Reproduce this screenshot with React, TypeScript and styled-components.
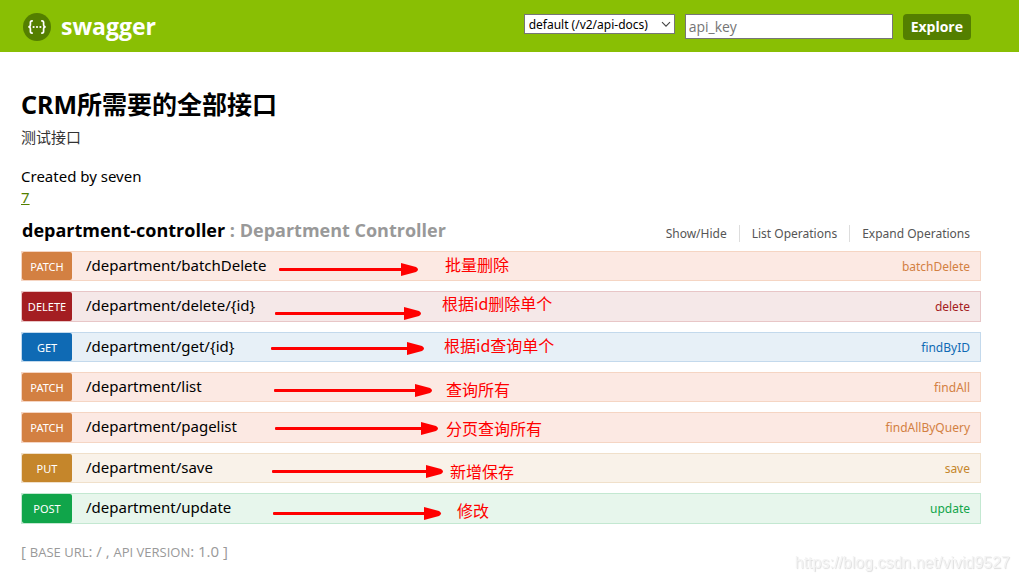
import React from "react";
import styled, { createGlobalStyle } from "styled-components";

type Method = "get" | "post" | "put" | "patch" | "delete";

const palette: Record<Method, { main: string; back: string; line: string }> = {
  get: { main: "#0f6ab4", back: "#e7f0f7", line: "#c3d9ec" },
  post: { main: "#10a54a", back: "#e7f6ec", line: "#c3e8d1" },
  put: { main: "#c5862b", back: "#f9f2e9", line: "#f0e0ca" },
  patch: { main: "#d38042", back: "#fce9e3", line: "#f5d5c3" },
  delete: { main: "#a41e22", back: "#f5e8e8", line: "#e8c6c7" },
};

interface Operation {
  method: Method;
  path: string;
  name: string;
}

const operations: Operation[] = [
  { method: "patch", path: "/department/batchDelete", name: "batchDelete" },
  { method: "delete", path: "/department/delete/{id}", name: "delete" },
  { method: "get", path: "/department/get/{id}", name: "findByID" },
  { method: "patch", path: "/department/list", name: "findAll" },
  { method: "patch", path: "/department/pagelist", name: "findAllByQuery" },
  { method: "put", path: "/department/save", name: "save" },
  { method: "post", path: "/department/update", name: "update" },
];

/* Hand-drawn notes: arrow start, tip and height, then the place of the label. */
const notes = [
  { from: 258, tip: 398, y: 18, x: 424, top: 1, text: "批量删除" },
  { from: 254, tip: 401, y: 62, x: 421, top: 40, text: "根据id删除单个" },
  { from: 250, tip: 404, y: 97, x: 423, top: 82, text: "根据id查询单个" },
  { from: 253, tip: 412, y: 139, x: 425, top: 126, text: "查询所有" },
  { from: 254, tip: 418, y: 177, x: 425, top: 165, text: "分页查询所有" },
  { from: 251, tip: 423, y: 220, x: 429, top: 208, text: "新增保存" },
  { from: 252, tip: 421, y: 262, x: 436, top: 247, text: "修改" },
];

const GlobalStyle = createGlobalStyle`
  * { box-sizing: border-box; }
  body {
    margin: 0;
    background: #fff;
    color: #000;
    font: 15px/22px "Noto Sans", "Noto Sans CJK SC", sans-serif;
  }
`;

const Header = styled.header`
  display: flex;
  align-items: center;
  justify-content: space-between;
  min-height: 52px;
  padding: 2px 48px 0 22px;
  background: #89bf04;
`;

const Brand = styled.a`
  display: flex;
  align-items: center;
  gap: 9px;
  color: #fff;
  font-family: "Open Sans", sans-serif;
  font-size: 23px;
  line-height: 28px;
  font-weight: 700;
  text-decoration: none;
`;

const BrandName = styled.span`
  padding-bottom: 3px;
`;

const ApiForm = styled.form`
  display: flex;
  align-items: flex-start;
  gap: 10px;
`;

const SelectBox = styled.div`
  position: relative;
  display: flex;
`;

const SpecSelect = styled.select`
  appearance: none;
  width: 151px;
  height: 20px;
  padding: 1px 18px 0 4px;
  border: 1px solid #767676;
  border-radius: 0;
  background: #fff;
  color: #000;
  font: 12px/18px "Noto Sans", sans-serif;
`;

const Chevron = styled.svg`
  position: absolute;
  top: 7px;
  right: 4px;
  pointer-events: none;
`;

const KeyInput = styled.input`
  width: 208px;
  height: 25px;
  padding: 1px 3px;
  border: 1px solid #767676;
  background: #fff;
  font: 14px/20px "Open Sans", sans-serif;
  &::placeholder {
    color: #757575;
    opacity: 1;
  }
`;

const ExploreButton = styled.button`
  height: 26px;
  padding: 0 8px;
  border: 0;
  border-radius: 4px;
  background: #547f00;
  color: #fff;
  font: 700 14px/26px "Open Sans", sans-serif;
`;

const Page = styled.main`
  padding: 35px 38px 16px 21px;
`;

const Title = styled.h1`
  margin: 0;
  font-size: 25px;
  line-height: 34px;
  font-weight: 700;
`;

const Description = styled.p`
  margin: 5px 0 18px;
  color: #333;
  line-height: 22px;
`;

const Contact = styled.p`
  margin: 0;
  line-height: 21px;
`;

const ContactLink = styled.a`
  color: #547f00;
`;

const ResourceBar = styled.div`
  display: flex;
  align-items: center;
  justify-content: space-between;
  margin: 8px 0 7px;
  padding: 0 11px 0 1px;
`;

const ResourceName = styled.h2`
  margin: 0;
  font-family: "Open Sans", sans-serif;
  font-size: 18px;
  line-height: 28px;
  font-weight: 700;
`;

const Muted = styled.span`
  color: #999;
`;

const Options = styled.ul`
  display: flex;
  margin: 6px 0 0;
  padding: 0;
  list-style: none;
`;

const Option = styled.li`
  padding: 0 12px;
  border-right: 1px solid #ddd;
  font-size: 12px;
  line-height: 17px;
  &:last-child {
    padding-right: 0;
    border-right: 0;
  }
`;

const OptionLink = styled.a`
  color: #555;
  text-decoration: none;
`;

const Board = styled.div`
  position: relative;
`;

const OperationList = styled.ul`
  display: flex;
  flex-direction: column;
  gap: 10px;
  margin: 0;
  padding: 0;
  list-style: none;
`;

const Row = styled.li<{ $method: Method }>`
  display: flex;
  align-items: stretch;
  height: 30px;
  padding-right: 10px;
  border: 1px solid ${(p) => palette[p.$method].line};
  background: ${(p) => palette[p.$method].back};
  &:nth-child(3n + 2),
  &:last-child {
    height: 31px;
  }
`;

const MethodLink = styled.a<{ $method: Method }>`
  width: 50px;
  border-radius: 2px;
  background: ${(p) => palette[p.$method].main};
  color: #fff;
  font-size: 11px;
  line-height: 30px;
  text-align: center;
  text-decoration: none;
  text-transform: uppercase;
`;

const PathLink = styled.a`
  flex: 1;
  padding-left: 14px;
  color: #000;
  line-height: 26px;
  text-decoration: none;
`;

const NameLink = styled.a<{ $method: Method }>`
  color: ${(p) => palette[p.$method].main};
  font-size: 12px;
  line-height: 29px;
  text-decoration: none;
`;

const Arrows = styled.svg`
  position: absolute;
  top: 0;
  left: 0;
  pointer-events: none;
`;

const Note = styled.span<{ $x: number; $top: number }>`
  position: absolute;
  left: ${(p) => p.$x}px;
  top: ${(p) => p.$top}px;
  color: #f00;
  font-family: "Noto Sans CJK SC", sans-serif;
  font-size: 16px;
  line-height: 24px;
  white-space: nowrap;
`;

const Footer = styled.footer`
  margin-top: 16px;
  color: #999;
  font-family: "Open Sans", sans-serif;
  line-height: 22px;
`;

const SmallCaps = styled.span`
  font-size: 13px;
  text-transform: uppercase;
`;

const Watermark = styled.div`
  position: fixed;
  right: 9px;
  bottom: 8px;
  color: #f4f4f4;
  font: 16px/20px "Liberation Sans", sans-serif;
  text-shadow: 1px 1px 1px #ddd;
`;

function Logo() {
  return (
    <svg width="30" height="30" viewBox="0 0 30 30" aria-hidden="true">
      <circle cx="15" cy="15" r="14" fill="#547f00" />
      <g fill="none" stroke="#fff" strokeWidth="1.7">
        <path d="M10.8 8.8H10C8.8 8.8 8.4 9.5 8.4 10.6V12.8C8.4 14.2 7.7 14.9 6.3 14.9C7.7 14.9 8.4 15.6 8.4 17V19.2C8.4 20.4 8.8 21.1 10 21.1H10.8" />
        <path d="M19.2 8.8H20C21.2 8.8 21.6 9.5 21.6 10.6V12.8C21.6 14.2 22.3 14.9 23.7 14.9C22.3 14.9 21.6 15.6 21.6 17V19.2C21.6 20.4 21.2 21.1 20 21.1H19.2" />
      </g>
      <g fill="#fff">
        <circle cx="11.6" cy="15" r="1.1" />
        <circle cx="15" cy="15" r="1.1" />
        <circle cx="18.4" cy="15" r="1.1" />
      </g>
    </svg>
  );
}

export default function App() {
  return (
    <>
      <GlobalStyle />
      <Header>
        <Brand href="#">
          <Logo />
          <BrandName>swagger</BrandName>
        </Brand>
        <ApiForm onSubmit={(e) => e.preventDefault()}>
          <SelectBox>
            <SpecSelect aria-label="API specification">
              <option>default (/v2/api-docs)</option>
            </SpecSelect>
            <Chevron width="10" height="7" viewBox="0 0 10 7" aria-hidden="true">
              <path d="M1 1.2L5 5.2L9 1.2" fill="none" stroke="#444" strokeWidth="1.1" />
            </Chevron>
          </SelectBox>
          <KeyInput type="text" placeholder="api_key" aria-label="api_key" />
          <ExploreButton type="submit">Explore</ExploreButton>
        </ApiForm>
      </Header>
      <Page>
        <Title>CRM所需要的全部接口</Title>
        <Description>测试接口</Description>
        <Contact>Created by seven</Contact>
        <Contact>
          <ContactLink href="#">7</ContactLink>
        </Contact>
        <ResourceBar>
          <ResourceName>
            department-controller <Muted>: Department Controller</Muted>
          </ResourceName>
          <Options>
            {["Show/Hide", "List Operations", "Expand Operations"].map((label) => (
              <Option key={label}>
                <OptionLink href="#">{label}</OptionLink>
              </Option>
            ))}
          </Options>
        </ResourceBar>
        <Board>
          <OperationList>
            {operations.map((op) => (
              <Row key={op.path} $method={op.method}>
                <MethodLink href="#" $method={op.method}>
                  {op.method}
                </MethodLink>
                <PathLink href="#">{op.path}</PathLink>
                <NameLink href="#" $method={op.method}>
                  {op.name}
                </NameLink>
              </Row>
            ))}
          </OperationList>
          <Arrows width="440" height="273" viewBox="0 0 440 273" aria-hidden="true">
            {notes.map((n) => (
              <g key={n.text} fill="#f00" stroke="none">
                <rect x={n.from} y={n.y - 1} width={n.tip - n.from - 10} height="3" rx="1" />
                <path
                  d={`M${n.tip - 18} ${n.y - 6}L${n.tip - 3} ${n.y - 2}Q${n.tip + 1} ${n.y + 0.5} ${n.tip - 3} ${n.y + 3}L${n.tip - 18} ${n.y + 7}Z`}
                />
              </g>
            ))}
          </Arrows>
          {notes.map((n) => (
            <Note key={n.text} $x={n.x} $top={n.top}>
              {n.text}
            </Note>
          ))}
        </Board>
        <Footer>
          [ <SmallCaps>base url</SmallCaps>: / , <SmallCaps>api version</SmallCaps>: 1.0 ]
        </Footer>
      </Page>
      <Watermark>https://blog.csdn.net/vivid9527</Watermark>
    </>
  );
}
